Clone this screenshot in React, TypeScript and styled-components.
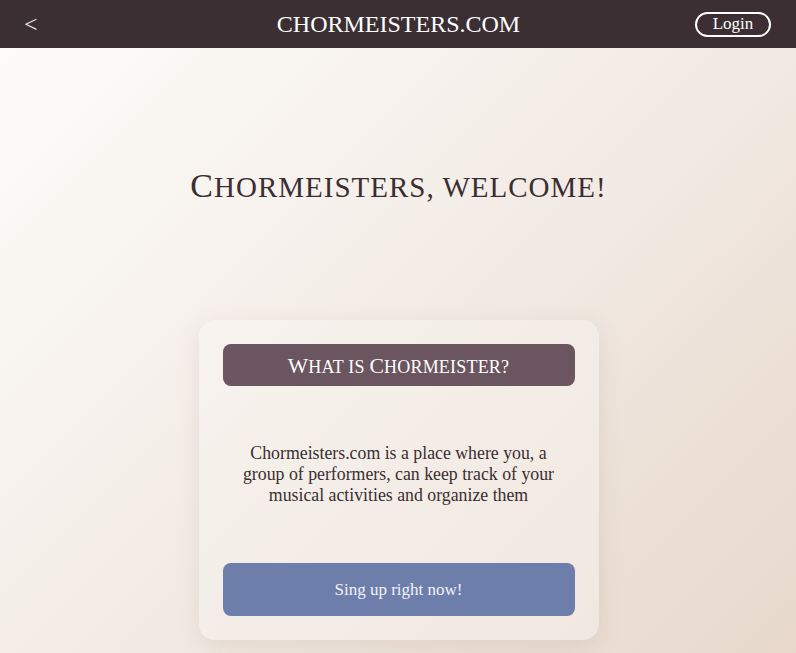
import React from "react";
import styled, { createGlobalStyle } from "styled-components";

const Global = createGlobalStyle`
  html, body { margin: 0; padding: 0; }
  body {
    font-family: "Liberation Serif", "DejaVu Serif", serif;
    color: #3a2e32;
  }
  * { box-sizing: border-box; }
`;

const Page = styled.div`
  min-height: 100vh;
  display: flex;
  flex-direction: column;
  background: linear-gradient(135deg, #fefdfb 0%, #f3ece6 50%, #e7d8cb 100%);
`;

const TopBar = styled.header`
  height: 48px;
  background: #3b2f33;
  display: flex;
  align-items: center;
  justify-content: space-between;
  padding: 0 25px 0 24px;
  color: #ffffff;
`;

const Back = styled.button`
  background: none;
  border: none;
  color: #f2eeee;
  font-family: inherit;
  font-size: 24px;
  padding: 0;
  width: 78px;
  text-align: left;
  cursor: pointer;
`;

const Brand = styled.div`
  font-size: 24px;
  color: #ffffff;
`;

const LoginButton = styled.button`
  width: 76px;
  height: 25px;
  border: 2px solid #ffffff;
  border-radius: 13px;
  background: transparent;
  color: #ffffff;
  font-family: inherit;
  font-size: 17px;
  padding: 0 0 1px;
  cursor: pointer;
`;

const Main = styled.main`
  flex: 1;
  display: flex;
  flex-direction: column;
  align-items: center;
  padding-top: 118px;
  padding-left: 1px;
`;

const Heading = styled.h1`
  margin: 0;
  font-weight: 400;
  font-size: 29px;
  line-height: 40px;
  letter-spacing: 1px;
  text-transform: uppercase;
  color: #3a2e32;
`;

const Cap = styled.span<{ $size: number }>`
  font-size: ${(p) => p.$size}px;
`;

const Card = styled.section`
  margin-top: 113px;
  width: 400px;
  height: 320px;
  padding: 24px;
  border-radius: 16px;
  background: linear-gradient(135deg, rgba(247, 243, 238, 0.85), rgba(242, 233, 226, 0.85));
  box-shadow: 0 6px 24px rgba(120, 90, 70, 0.12);
  display: flex;
  flex-direction: column;
`;

const CardTitle = styled.h2`
  margin: 0;
  height: 42px;
  border-radius: 8px;
  background: #6b555e;
  color: #ffffff;
  font-weight: 400;
  font-size: 18px;
  line-height: 44px;
  text-transform: uppercase;
  text-align: center;
  letter-spacing: 0.2px;
`;

const Body = styled.p`
  flex: 1;
  margin: 0;
  display: flex;
  align-items: center;
  justify-content: center;
  text-align: center;
  font-size: 17.8px;
  line-height: 21px;
  padding: 0 14px;
  color: #3a2e32;
`;

const SignUp = styled.button`
  height: 53px;
  border: none;
  border-radius: 8px;
  background: #6e7eab;
  color: #f2f2f8;
  font-family: inherit;
  font-size: 17px;
  cursor: pointer;
`;

export default function App() {
  return (
    <>
      <Global />
      <Page>
        <TopBar>
          <Back>&lt;</Back>
          <Brand>CHORMEISTERS.COM</Brand>
          <LoginButton>Login</LoginButton>
        </TopBar>
        <Main>
          <Heading>
            <Cap $size={34}>C</Cap>hormeisters, welcome!
          </Heading>
          <Card>
            <CardTitle>
              <Cap $size={21.6}>W</Cap>hat is <Cap $size={21.6}>C</Cap>hormeister?
            </CardTitle>
            <Body>
              Chormeisters.com is a place where you, a group of performers, can keep track of your musical activities and organize them
            </Body>
            <SignUp>Sing up right now!</SignUp>
          </Card>
        </Main>
      </Page>
    </>
  );
}
